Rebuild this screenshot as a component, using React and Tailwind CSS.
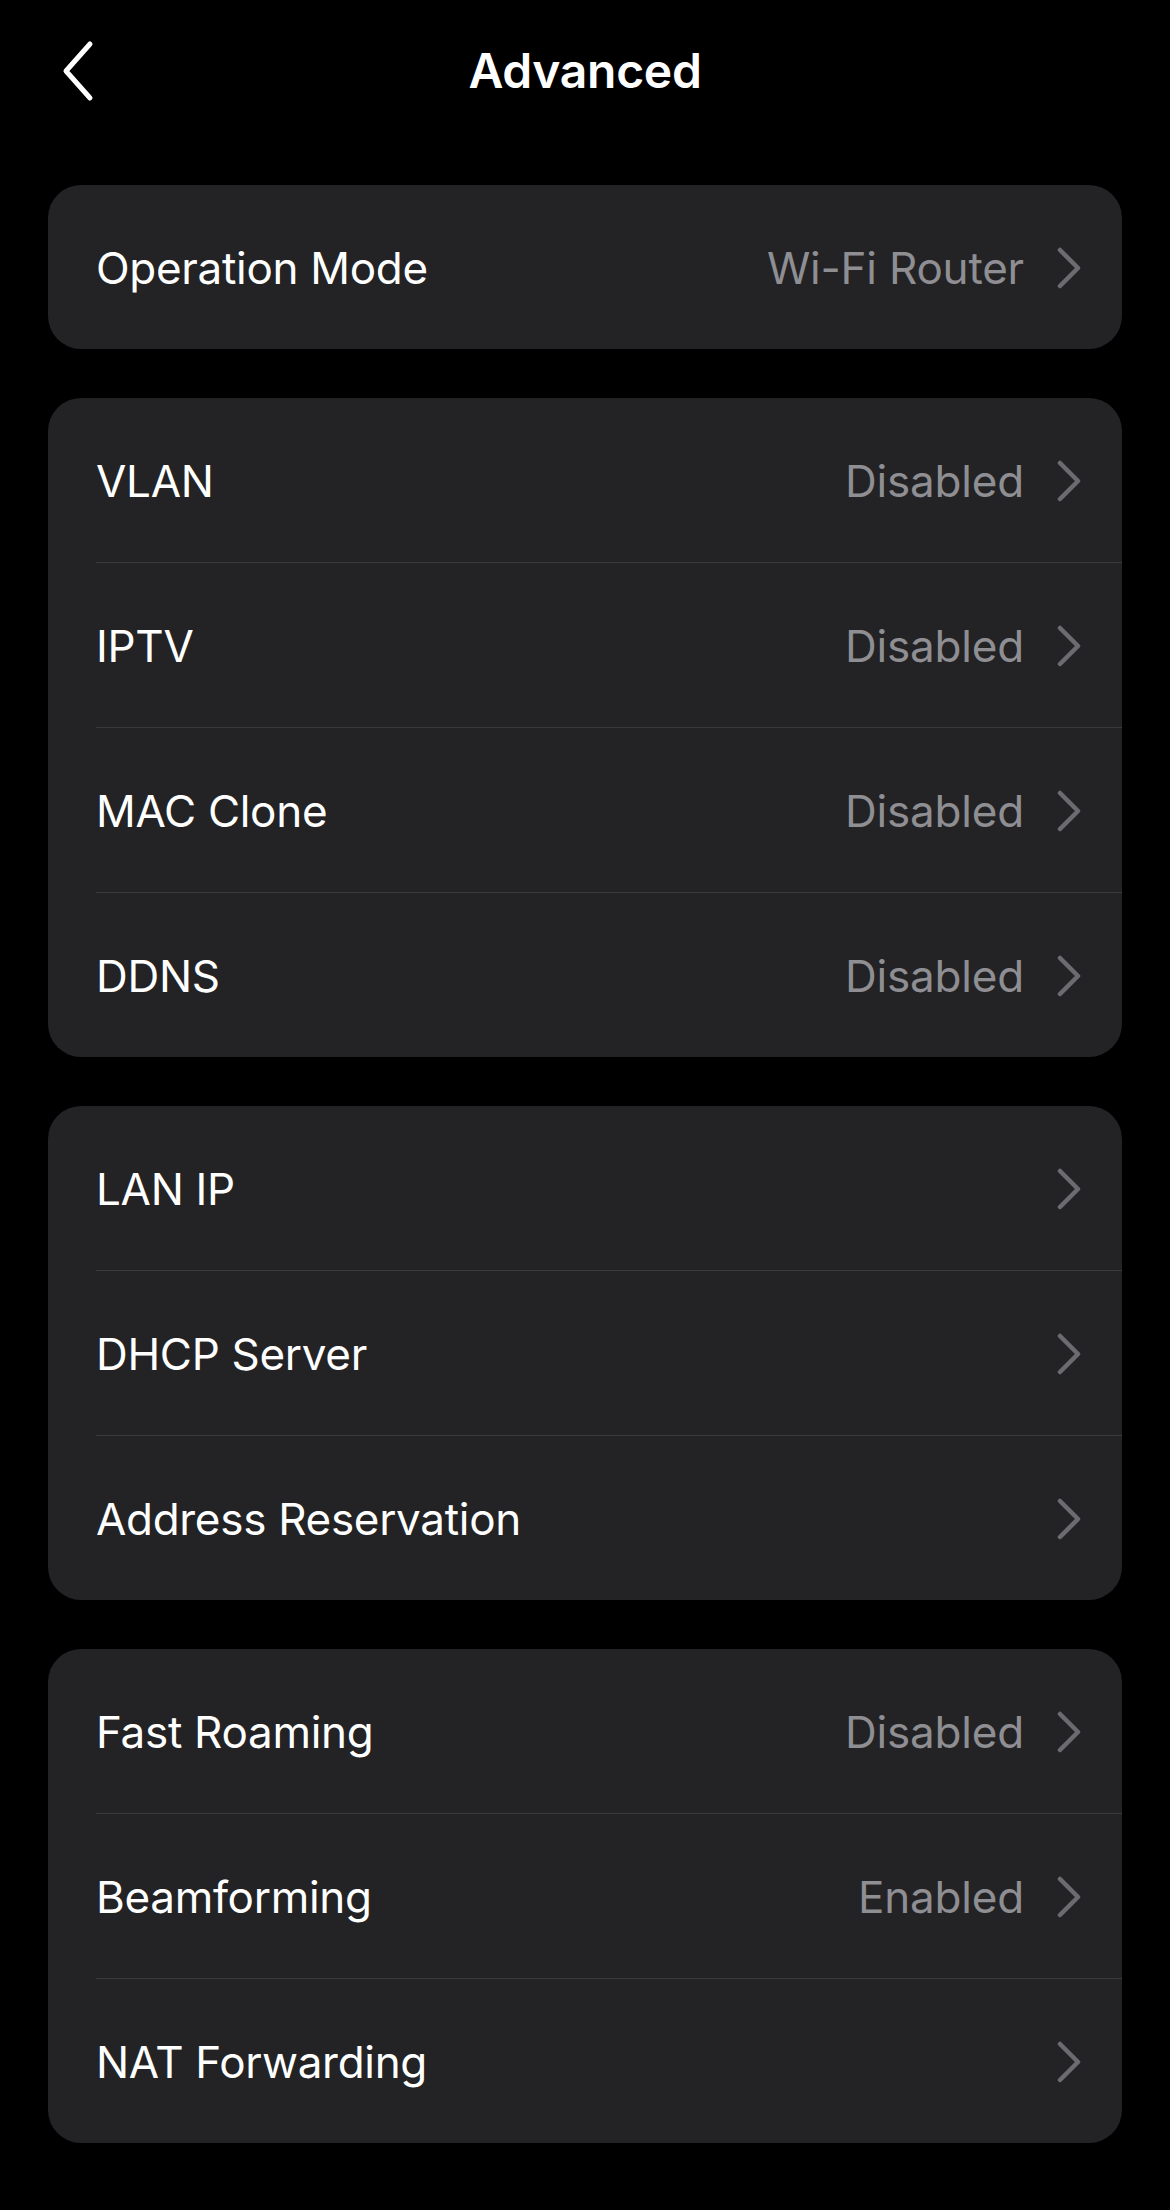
import React from 'react';

const groups = [
  [{ label: 'Operation Mode', value: 'Wi-Fi Router' }],
  [
    { label: 'VLAN', value: 'Disabled' },
    { label: 'IPTV', value: 'Disabled' },
    { label: 'MAC Clone', value: 'Disabled' },
    { label: 'DDNS', value: 'Disabled' },
  ],
  [
    { label: 'LAN IP' },
    { label: 'DHCP Server' },
    { label: 'Address Reservation' },
  ],
  [
    { label: 'Fast Roaming', value: 'Disabled' },
    { label: 'Beamforming', value: 'Enabled' },
    { label: 'NAT Forwarding' },
  ],
];

function Chevron() {
  return (
    <svg width="26" height="42" viewBox="0 0 26 42" className="shrink-0">
      <path d="M4 3 L22 21 L4 39" fill="none" stroke="#6c6c70" strokeWidth="4.5" strokeLinecap="round" strokeLinejoin="round" />
    </svg>
  );
}

function Row({ label, value, last }) {
  return (
    <div className="pl-[48px]">
      <div className="h-[164px] flex items-center pr-[40px] pt-[2px]">
        <span className="flex-1 text-white text-[44px] tracking-[-0.3px]">{label}</span>
        {value && <span className="text-[#8e8e93] text-[44px] tracking-[-0.2px] mr-[32px]">{value}</span>}
        <Chevron />
      </div>
      {!last && <div className="h-px bg-[#3a3a3c]" />}
    </div>
  );
}

export default function App() {
  return (
    <div className="min-h-[2210px] bg-black font-['Inter',sans-serif] antialiased">
      <div className="h-[142px] flex items-center relative">
        <button className="absolute left-[60px] top-[40px]">
          <svg width="38" height="62" viewBox="0 0 38 62">
            <path d="M30 4 L6 31 L30 58" fill="none" stroke="#fff" strokeWidth="5" strokeLinecap="round" strokeLinejoin="round" />
          </svg>
        </button>
        <h1 className="w-full text-center text-white text-[48px] font-semibold tracking-[-0.3px]">Advanced</h1>
      </div>
      <div className="flex flex-col gap-[49px] px-[48px] pt-[43px]">
        {groups.map((rows, gi) => (
          <div key={gi} className="bg-[#232325] rounded-[33px] overflow-hidden">
            {rows.map((r, i) => (
              <Row key={r.label} {...r} last={i === rows.length - 1} />
            ))}
          </div>
        ))}
      </div>
    </div>
  );
}
